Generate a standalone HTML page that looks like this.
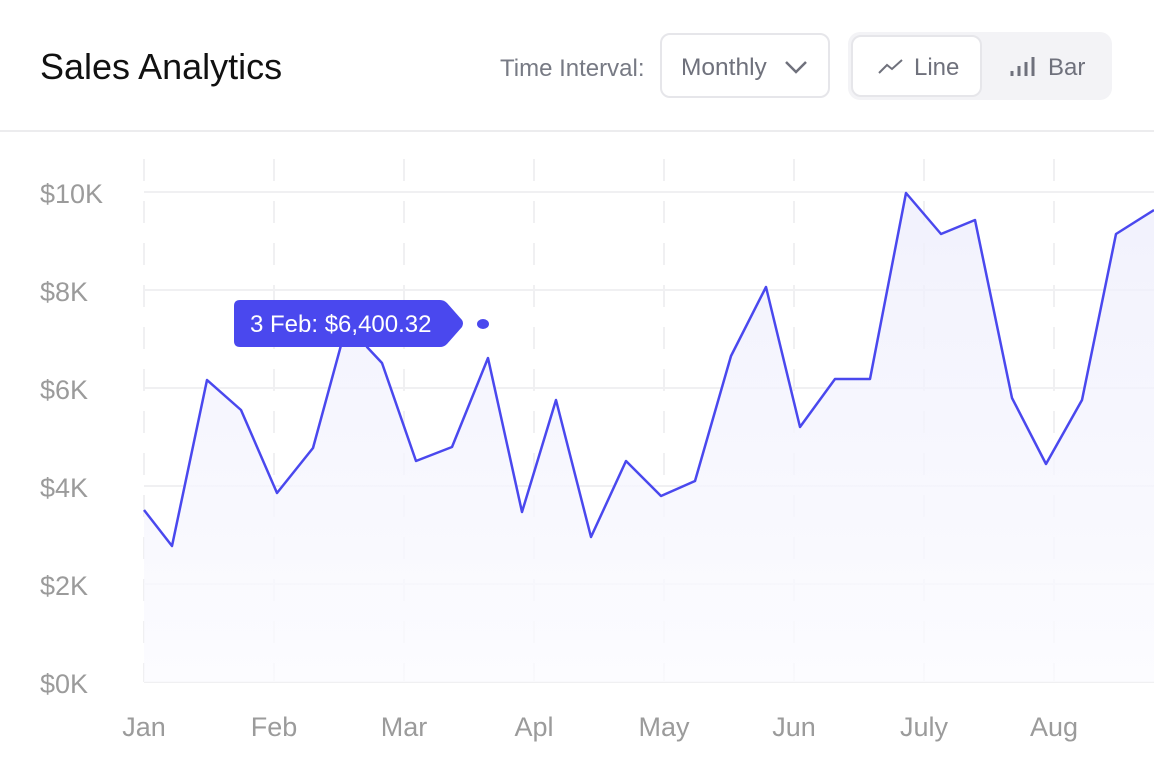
<!DOCTYPE html>
<html><head><style>
body{margin:0;width:1154px;height:758px;background:#fff;font-family:"Liberation Sans",sans-serif;overflow:hidden;position:relative}
.t{position:absolute;left:40px;top:46px;font-size:36px;color:#111}
.hdr{position:absolute;left:0;top:130px;width:1154px;height:2px;background:#ececee}
.lbl{position:absolute;left:500px;top:55px;font-size:24px;color:#777a84}
.sel{position:absolute;left:660px;top:33px;width:170px;height:65px;box-sizing:border-box;border:2px solid #e6e6ea;border-radius:10px;background:#fff}
.sel span{position:absolute;left:19px;top:19px;font-size:24.5px;color:#6f717c}
.tg{position:absolute;left:848px;top:32px;width:264px;height:68px;border-radius:12px;background:#f3f3f6}
.on{position:absolute;left:3px;top:3px;width:131px;height:62px;box-sizing:border-box;border:2px solid #e6e6ea;border-radius:10px;background:#fff}
.tx{position:absolute;font-size:24px;color:#6f717c}
</style></head><body>
<div class="t">Sales Analytics</div>
<div class="lbl">Time Interval:</div>
<div class="sel"><span>Monthly</span>
<svg style="position:absolute;left:122px;top:24px" width="24" height="16"><path d="M2 3 L12 13 L22 3" fill="none" stroke="#6f717c" stroke-width="2.5"/></svg></div>
<div class="tg"><div class="on"></div>
<svg style="position:absolute;left:29px;top:25px" width="28" height="20"><path d="M2 16 L10 8 L15 12 L25 3" fill="none" stroke="#6f717c" stroke-width="2"/></svg>
<div class="tx" style="left:66px;top:22px">Line</div>
<svg style="position:absolute;left:160px;top:24px" width="32" height="22"><g stroke="#6f717c" stroke-width="3"><path d="M4 20V15M11 20V10M18 20V6M25 20V1"/></g></svg>
<div class="tx" style="left:200px;top:22px">Bar</div></div>
<div class="hdr"></div>
<svg style="position:absolute;left:0;top:0" width="1154" height="758">
<defs><linearGradient id="g" x1="0" y1="0" x2="0" y2="1"><stop offset="0" stop-color="#eeeefc"/><stop offset="1" stop-color="#fbfbff"/></linearGradient></defs>
<g stroke="#f0f0f2" stroke-width="2">
<path d="M144 192H1154M144 290H1154M144 388H1154M144 486H1154M144 584H1154M144 682H1154"/>
<g stroke-dasharray="22 20"><path d="M144 159V682M274 159V682M404 159V682M534 159V682M664 159V682M794 159V682M924 159V682M1054 159V682"/></g></g>
<path d="M144 510L172 546L207 380L241 410L277 493L313 448L352 305L367 347L382 363L416 461L452 447L488 358L522 512L556 400L591 537L626 461L661 496L695 481L731 356L766 287L800 427L835 379L870 379L906 193L941 234L975 220L1012 398L1046 464L1082 400L1116 234L1154 210V682H144Z" fill="url(#g)" opacity="0.8"/>
<path d="M144 510L172 546L207 380L241 410L277 493L313 448L352 305L367 347L382 363L416 461L452 447L488 358L522 512L556 400L591 537L626 461L661 496L695 481L731 356L766 287L800 427L835 379L870 379L906 193L941 234L975 220L1012 398L1046 464L1082 400L1116 234L1154 210" fill="none" stroke="#4a48ee" stroke-width="2.5" stroke-linejoin="round"/>
<path d="M240 300H440Q444 300 447 303L462 320Q464 323 462 327L447 344Q444 347 440 347H240Q234 347 234 341V306Q234 300 240 300Z" fill="#4a48ee"/>
<text x="250" y="332" font-size="24" fill="#fff" font-family="Liberation Sans">3 Feb: $6,400.32</text>
<ellipse cx="483" cy="324" rx="6" ry="5" fill="#4a48ee"/>
<g font-size="27" fill="#9b9b9b" font-family="Liberation Sans">
<text x="40" y="203">$10K</text><text x="40" y="301">$8K</text><text x="40" y="399">$6K</text><text x="40" y="497">$4K</text><text x="40" y="595">$2K</text><text x="40" y="693">$0K</text>
<g text-anchor="middle"><text x="144" y="736">Jan</text><text x="274" y="736">Feb</text><text x="404" y="736">Mar</text><text x="534" y="736">Apl</text><text x="664" y="736">May</text><text x="794" y="736">Jun</text><text x="924" y="736">July</text><text x="1054" y="736">Aug</text></g></g>
</svg>
</body></html>
